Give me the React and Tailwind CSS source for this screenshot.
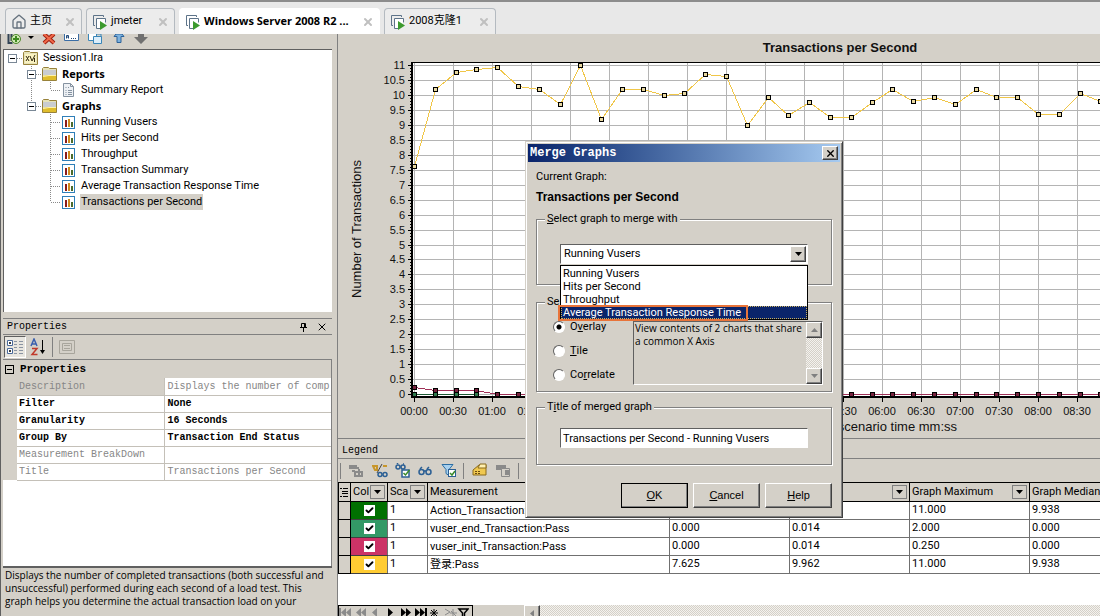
import React, { useState } from "react";
import { Check, House, X } from "lucide-react";

const treeRows = [
  { guides: ["box"], icon: "session", label: "Session1.lra" },
  { guides: ["", "boxTee"], icon: "folder", label: "Reports", bold: true },
  { guides: ["", "v", "l"], icon: "doc", label: "Summary Report" },
  { guides: ["", "boxEnd"], icon: "folder", label: "Graphs", bold: true },
  { guides: ["", "", "t"], icon: "graph", label: "Running Vusers" },
  { guides: ["", "", "t"], icon: "graph", label: "Hits per Second" },
  { guides: ["", "", "t"], icon: "graph", label: "Throughput" },
  { guides: ["", "", "t"], icon: "graph", label: "Transaction Summary" },
  { guides: ["", "", "t"], icon: "graph", label: "Average Transaction Response Time" },
  { guides: ["", "", "l"], icon: "graph", label: "Transactions per Second", selected: true },
];

const properties = [
  { name: "Description", value: "Displays the number of comp", disabled: true },
  { name: "Filter", value: "None" },
  { name: "Granularity", value: "16 Seconds" },
  { name: "Group By", value: "Transaction End Status" },
  { name: "Measurement BreakDown", value: "", disabled: true },
  { name: "Title", value: "Transactions per Second", disabled: true },
];

const legendRows = [
  { color: "bg-[#007000]", name: "Action_Transaction:", values: ["", "", "11.000", "9.938"] },
  { color: "bg-[#339966]", name: "vuser_end_Transaction:Pass", values: ["0.000", "0.014", "2.000", "0.000"] },
  { color: "bg-[#cc3366]", name: "vuser_init_Transaction:Pass", values: ["0.000", "0.014", "0.250", "0.000"] },
  { color: "bg-[#ffcc33]", name: "登录:Pass", values: ["7.625", "9.962", "11.000", "9.938"] },
];

// One sample every 16 seconds
const passSeries = [
  7.63, 10.2, 10.78, 10.88, 10.94, 10.31, 10.2, 9.7, 11, 9.2, 10.2, 10.2, 10, 10.06, 10.7, 10.64, 9,
  9.94, 9.33, 9.77, 9.27, 9.27, 9.77, 10.2, 9.81, 9.94, 9.7, 10.2, 9.94, 9.94, 9.37, 9.37, 10.06, 9.81,
];
const initSeries = passSeries.map((_, i) => [0.25, 0.13, 0.13, 0.13][i] ?? 0);

const graphNames = ["Running Vusers", "Hits per Second", "Throughput", "Average Transaction Response Time"];

const sans = "font-['Roboto','Noto_Sans_CJK_SC',sans-serif]";
const small = "font-['Open_Sans',sans-serif] text-[10px] leading-[13px]";
const arial = "font-['Liberation_Sans',sans-serif]";
const boldSans = "font-['Open_Sans','Noto_Sans_CJK_SC',sans-serif] font-bold";
const mono = "font-['Liberation_Mono','Noto_Sans_CJK_SC',monospace]";
const raised =
  "bg-[#d4d0c8] border border-t-white border-l-white border-r-[#404040] border-b-[#404040] shadow-[inset_-1px_-1px_0_#808080]";
const sunken = "border border-t-[#606060] border-l-[#606060] border-r-white border-b-white";

const VmIcon = () => (
  <svg width="16" height="16" viewBox="0 0 16 16" fill="none" className="shrink-0">
    <path d="M3 11.500H1.500v-10h10V3" stroke="#5d7389" />
    <path d="M8 14.500H4.500v-10h9v4" stroke="#5d7389" fill="#fff" />
    <path d="M8 7l7 4.500-7 4.500z" fill="#3c9a2e" />
  </svg>
);

const Tab = ({ icon, label, width, active }) => (
  <div
    className={`flex h-[26px] items-center rounded-t border border-b-0 pr-[5px] pl-[5px] text-[11px] ${width} ${
      active ? `border-white bg-white ${boldSans}` : "border-[#b4bac0] bg-[#ececec]"
    }`}
  >
    {icon}
    <a href="#" className="ml-[3px] flex-1 whitespace-nowrap">{label}</a>
    <button aria-label={`Close ${label}`} className="text-[#c0c0c0]">
      <X size={12} strokeWidth={4} />
    </button>
  </div>
);

const Guide = ({ kind }) => {
  const box = kind.startsWith("box");
  return (
    <svg width="19" height="16" viewBox="0 0 19 16" fill="none" className="shrink-0">
      <g stroke="#8a8a8a" strokeDasharray="1 1">
        {(kind === "v" || kind === "t" || kind === "boxTee") && <path d="M8.500 0v16" />}
        {(kind === "l" || kind === "boxEnd") && <path d="M8.500 0v8" />}
        {kind && kind !== "v" && <path d="M9 8.500h10" />}
      </g>
      {box && (
        <>
          <rect x="4.500" y="4.500" width="8" height="8" fill="#fff" stroke="#7a8896" />
          <path d="M6 8.500h5" stroke="#000" />
        </>
      )}
    </svg>
  );
};

const TreeIcon = ({ kind }) => {
  if (kind === "graph") {
    return (
      <svg width="19" height="16" viewBox="0 0 19 16" className="shrink-0">
        <rect x="1.500" y="2.500" width="12" height="12" fill="#fff" stroke="#2f7fb8" />
        <rect x="4" y="6" width="2" height="7" fill="#8a1c1c" />
        <rect x="7" y="5" width="2" height="8" fill="#d08a1e" />
        <rect x="10" y="8" width="2" height="5" fill="#4a6a2c" />
      </svg>
    );
  }
  if (kind === "doc") {
    return (
      <svg width="19" height="16" viewBox="0 0 19 16" fill="none" className="shrink-0">
        <path d="M2.500 1.500h7l3 3v10h-10z" fill="#eef1f5" stroke="#8592a0" />
        <path d="M9.500 1.500v3h3M4.500 5.500h1M7 5.500h1M4.500 8.500h1M7 8.500h4M4.500 10.500h1M7 10.500h4M4.500 12.500h1M7 12.500h4" stroke="#8592a0" />
      </svg>
    );
  }
  return (
    <svg width="19" height="16" viewBox="0 0 19 16" className="shrink-0">
      <path d="M.5 2.500l1-1h5l1 1h7v12H.5z" fill="#e6e2b8" stroke="#98823a" />
      {kind === "session" ? (
        <>
          <rect x="2" y="4" width="11" height="9" fill="#fbf3c0" />
          <path d="M3 6l3 5M6 6l-3 5M7 6l2 5 3-6M11.500 8v4" stroke="#332a10" fill="none" />
        </>
      ) : (
        <>
          <path d="M1 4h13v5H1z" fill="#c9ccd0" />
          <path d="M1 10l6-1h7v5H1z" fill="#e0bd2c" />
          <path d="M1 10.500l6-1h7" stroke="#fff3a8" fill="none" />
        </>
      )}
    </svg>
  );
};

const SessionToolbar = () => (
  <div className="flex h-[15px] shrink-0 items-start overflow-hidden pl-1">
    <button aria-label="Add graph" className="w-5">
      <svg width="16" height="12" viewBox="0 0 16 12" fill="none">
        <path d="M1.500 0v9h4M4.500 0v7" stroke="#345" strokeWidth="2" />
        <circle cx="9" cy="5" r="4.500" fill="#cfe8b4" stroke="#4d8a2a" />
        <path d="M9 2v6M6 5h6" stroke="#3f8a20" strokeWidth="2" />
      </svg>
    </button>
    <button aria-label="More" className="-ml-1 flex w-4 justify-center">
      <svg width="6" height="8"><path d="M0 2h6l-3 3z" /></svg>
    </button>
    <button aria-label="Delete" className="flex w-5 justify-center">
      <svg width="14" height="11" viewBox="0 0 14 11">
        <path d="M2 0l10 9M12 0L2 9" stroke="#a02010" strokeWidth="4" />
        <path d="M2 0l10 9M12 0L2 9" stroke="#f0694a" strokeWidth="2" />
      </svg>
    </button>
    <button aria-label="Rename" className="flex w-6 justify-center">
      <svg width="15" height="9" viewBox="0 0 15 9" fill="none">
        <path d="M.5 0v6.500h14V0" fill="#fff" stroke="#3c6ea5" />
        <path d="M2.500 4.500V1.500h2v3M3 3h1M7 4.500h1M9 4.500h1M11 4.500h1" stroke="#224a7a" />
      </svg>
    </button>
    <button aria-label="Duplicate" className="flex w-6 justify-center">
      <svg width="15" height="11" viewBox="0 0 15 11">
        <path d="M.5 0v6.500h8V0" fill="#fff" stroke="#3a86b8" />
        <path d="M5.500 2.500h8v7h-8z" fill="#dceefa" stroke="#3a86b8" />
        <path d="M9 0h4v3" fill="none" stroke="#3a86b8" />
      </svg>
    </button>
    <button aria-label="Move up" className="flex w-6 justify-center">
      <svg width="12" height="10"><path d="M1 2.500h3v6h4v-6h3L9 0H3z" fill="#7db2de" stroke="#2c6299" /></svg>
    </button>
    <button aria-label="Move down" className="flex w-5 justify-center">
      <svg width="14" height="11"><path d="M4 0h6v3h4l-7 7-7-7h4z" fill="#707070" /></svg>
    </button>
  </div>
);

const PropertiesPanel = () => (
  <section className={`mt-1.5 ${mono} text-[10px]`}>
    <header className="flex h-[17px] items-center border-y border-[#808080] pr-1 pl-1">
      <h2 className="flex-1">Properties</h2>
      <button aria-label="Pin" className="mr-2">
        <svg width="9" height="10" viewBox="0 0 9 10" fill="none" stroke="#000">
          <path d="M2.500 5V1.500h4V5M5.500 1v4M1 5.500h7M4.500 6v4" />
        </svg>
      </button>
      <button aria-label="Close properties"><X size={12} strokeWidth={2} /></button>
    </header>
    <div className="flex h-6 items-center gap-1 pl-px">
      <button aria-label="Categorized" className={`flex h-[22px] w-[22px] items-center justify-center bg-[#e8e6e0] ${sunken}`}>
        <svg width="18" height="18" viewBox="0 0 18 18" fill="none">
          <path d="M1.500 2.500h5v5h-5zM1.500 10.500h5v5h-5z" fill="#fff" stroke="#4a6a9a" />
          <path d="M3 5h2M4 4v2M3 13h2M4 12v2" stroke="#000" />
          <path d="M8 3.500h3M13 3.500h4M8 6.500h3M13 6.500h4M8 9.500h3M13 9.500h4M8 12.500h3M13 12.500h4M8 15.500h3M13 15.500h4" stroke="#8a94a2" />
        </svg>
      </button>
      <button aria-label="Alphabetical">
        <svg width="18" height="18" viewBox="0 0 18 18" fill="none">
          <path d="M1 8l3-7 3 7M2 6h4" stroke="#3a5fae" strokeWidth="1.500" />
          <path d="M2 10.500h5l-5 6h5.500" stroke="#c0392b" strokeWidth="1.500" />
          <path d="M12.500 2v12" stroke="#000" />
          <path d="M10 12h5l-2.500 4z" fill="#000" />
        </svg>
      </button>
      <span className="mr-0.5 h-5 border-l border-[#808080]" />
      <button aria-label="Property pages" disabled>
        <svg width="16" height="16" viewBox="0 0 16 16" fill="none" stroke="#a8a59c">
          <path d="M.5 1.500h15v13H.5zM3.500 4.500h9v7h-9zM5 6.500h6M5 9.500h6" />
        </svg>
      </button>
    </div>
    <div className="h-[207px] overflow-hidden border-t border-r border-[#808080] bg-white">
      <table className="w-full table-fixed border-collapse whitespace-nowrap">
        <colgroup>
          <col className="w-3.5" />
          <col className="w-[147px]" />
          <col />
        </colgroup>
        <thead>
          <tr className="h-[18px] bg-[#d4d0c8] text-left text-[11px]">
            <th colSpan="3">
              <div className="flex items-center gap-1.5 pl-0.5">
                <span className="flex h-[9px] w-[9px] items-center justify-center border border-black">
                  <span className="h-px w-[5px] bg-black" />
                </span>
                Properties
              </div>
            </th>
          </tr>
        </thead>
        <tbody>
          {properties.map((p) => (
            <tr key={p.name} className={`h-[17px] ${p.disabled ? "text-[#868686]" : "font-bold"}`}>
              <td className="bg-[#d4d0c8]" />
              <td
                className={`border-r border-b border-[#c4c0b8] pl-0.5 ${
                  p.name === "Description" ? "bg-[#d4d0c8]" : ""
                }`}
              >
                {p.name}
              </td>
              <td className="overflow-hidden border-b border-[#c4c0b8] pl-[3px]">{p.value}</td>
            </tr>
          ))}
        </tbody>
      </table>
    </div>
    <p className={`h-[50px] border-t-2 border-[#606060] pt-px pr-1 pl-0.5 ${small}`}>
      Displays the number of completed transactions (both successful and unsuccessful) performed during each
      second of a load test. This graph helps you determine the actual transaction load on your
    </p>
  </section>
);

// Plot origin and scale inside the chart area
const X0 = 76;
const Y0 = 360;
const px = (i) => Math.round(X0 + i * 20.8);
const py = (v) => Math.round(Y0 - v * 29.9);

const Series = ({ data, stroke, fill }) => (
  <g>
    <polyline
      points={data.map((v, i) => `${px(i) + 0.5},${py(v) + 0.5}`).join(" ")}
      fill="none"
      stroke={stroke}
    />
    {data.map((v, i) => (
      <rect key={i} x={px(i) - 1.5} y={py(v) - 1.5} width="4" height="4" fill={fill} stroke="#000" />
    ))}
  </g>
);

const timeLabels = [
  [0, "00:00"], [1, "00:30"], [2, "01:00"], [3, "01:30"], [11, "05:30"], [12, "06:00"],
  [13, "06:30"], [14, "07:00"], [15, "07:30"], [16, "08:00"], [17, "08:30"],
];

const Chart = () => {
  const yTicks = Array.from({ length: 23 }, (_, i) => i / 2);
  const xTicks = Array.from({ length: 18 }, (_, i) => i);
  return (
    <div className="h-[405px] shrink-0 overflow-hidden border-b border-l border-[#808080]">
      <svg width="100%" height="404" className={arial} fontSize="11" shapeRendering="crispEdges">
        <rect x="74" y="29" width="100%" height="334" fill="#fff" />
        <g stroke="#b4b4b4">
          {yTicks.map((v) => <path key={v} d={`M74 ${py(v) + 0.5}h2000`} />)}
          {xTicks.map((i) => <path key={i} d={`M${X0 + i * 39 + 0.5} 29v334`} />)}
        </g>
        <g fill="#000">
          <rect x="73" y="28" width="2" height="336" />
          <rect x="73" y="28" width="100%" height="1" />
          <rect x="73" y="362" width="100%" height="2" />
          {yTicks.map((v) => <rect key={v} x="70" y={py(v)} width="3" height="1" />)}
          {Array.from({ length: 110 }, (_, i) => (
            <rect key={i} x="72" y={py(i / 10)} width="1" height="1" />
          ))}
          {xTicks.map((i) => <rect key={i} x={X0 + i * 39} y="364" width="1" height="4" />)}
        </g>
        <Series data={[0, 0, 0, 0]} stroke="#1c5a34" fill="#2e7a4c" />
        <Series data={initSeries} stroke="#a03058" fill="#7a2440" />
        <Series data={passSeries} stroke="#f0c648" fill="#e8d8a0" />
        <g fill="#111">
          {yTicks.map((v) => (
            <text key={v} x="67" y={py(v) + 4} textAnchor="end">{v}</text>
          ))}
          {timeLabels.map(([i, label]) => (
            <text key={i} x={X0 + i * 39} y="381" textAnchor="middle">{label}</text>
          ))}
          <text x="502" y="18" textAnchor="middle" fontSize="13" fontWeight="bold">Transactions per Second</text>
          <text x="619" y="397" textAnchor="end" fontSize="13">scenario time mm:ss</text>
          <text transform="translate(23 195) rotate(-90)" textAnchor="middle" fontSize="13">
            Number of Transactions
          </text>
        </g>
      </svg>
    </div>
  );
};

const DropArrow = ({ label }) => (
  <button aria-label={label} className="flex h-3.5 w-[15px] shrink-0 items-center justify-center border border-[#808080]">
    <svg width="7" height="4"><path d="M0 0h7L3.500 4z" /></svg>
  </button>
);

const HeaderCell = ({ label, width, arrow }) => (
  <th className={`h-[19px] border border-black border-l-black px-0.5 font-normal ${width}`}>
    <div className="flex items-center">
      <span className="flex-1 overflow-hidden text-left">{label}</span>
      {arrow && <DropArrow label="Filter column" />}
    </div>
  </th>
);

const LegendToolbar = () => (
  <div className="flex h-[23px] items-center pl-0.5">
    <span className="h-4 border-l border-[#808080]" />
    <button aria-label="Hide" className="ml-2 w-[23px]">
      <svg width="15" height="14" viewBox="0 0 15 14" fill="none" stroke="#8a8a8a" strokeWidth="2">
        <path d="M0 2h8M0 4h10M3 7h3M6 8h7v4H6zM10 5v8" />
      </svg>
    </button>
    <button aria-label="Toggle measurements" className="w-[23px]">
      <svg width="16" height="14" viewBox="0 0 16 14" fill="none">
        <path d="M1 2h4v4H3zM11 2h4" stroke="#c8962a" strokeWidth="2" />
        <path d="M10 0L5 9" stroke="#444" />
        <circle cx="8" cy="10.500" r="2" stroke="#2b5f94" strokeWidth="1.500" />
        <circle cx="13" cy="10.500" r="2" stroke="#2b5f94" strokeWidth="1.500" />
      </svg>
    </button>
    <button aria-label="Show checked" className="w-[23px]">
      <svg width="16" height="15" viewBox="0 0 16 15" fill="none" stroke="#2b5f94" strokeWidth="1.500">
        <circle cx="3" cy="4" r="2" />
        <circle cx="8" cy="4" r="2" />
        <path d="M2 1l1-1M8 1h1" />
        <rect x="7" y="7" width="7" height="7" fill="#fff" />
        <path d="M8.500 10l2 2 4-5" stroke="#3a8a2a" />
      </svg>
    </button>
    <button aria-label="Show all" className="w-[23px]">
      <svg width="14" height="10" viewBox="0 0 14 10" fill="none" stroke="#2b5f94" strokeWidth="1.500">
        <circle cx="3.500" cy="6" r="2.500" />
        <circle cx="10.500" cy="6" r="2.500" />
        <path d="M2 3l2-2M9 3l2-2M6 5h2" />
      </svg>
    </button>
    <button aria-label="Filter" className="w-[22px]">
      <svg width="16" height="15" viewBox="0 0 16 15" fill="none">
        <path d="M1 1.500h11l-4 5v6l-3-2V6.500z" fill="#a8d0ee" stroke="#2b6ea4" />
        <rect x="7.500" y="6.500" width="7" height="7" fill="#fff" stroke="#2b5f94" />
        <path d="M9 10l2 2 3-4" stroke="#3a8a2a" strokeWidth="1.500" />
      </svg>
    </button>
    <span className="h-4 border-l border-[#808080]" />
    <button aria-label="Configure columns" className="ml-2 w-6">
      <svg width="16" height="15" viewBox="0 0 16 15">
        <path d="M1 7l6-5h7v10H1z" fill="#f0c850" stroke="#8a6a1c" />
        <path d="M8 1h6v4H6z" fill="#fff0b0" stroke="#8a6a1c" />
        <path d="M3 8.500h2M6 8.500h2M3 10.500h2M6 10.500h2" stroke="#6a4a10" />
      </svg>
    </button>
    <button aria-label="Copy" className="w-[22px]">
      <svg width="15" height="13" viewBox="0 0 15 13">
        <path d="M0 1h10v5H0z" fill="#8a8a8a" />
        <path d="M5.500 4.500h8v8h-8z" fill="#d4d0c8" stroke="#8a8a8a" />
        <path d="M9 6h4v5H9z" fill="#8a8a8a" />
      </svg>
    </button>
    <span className="h-4 border-l border-[#808080]" />
  </div>
);

const RecordNavigator = () => (
  <div className="flex h-[11px] shrink-0 items-start overflow-hidden">
    <div className="flex h-4 w-[135px] items-start border border-black pt-px">
      <svg width="130" height="11" viewBox="0 0 130 11" fill="#8a8a8a">
        <path d="M0 1h2v9H0zM7 1v9L2 5.500zM12 1v9L7 5.500zM22 1v9l-5-4.500zM27 1v9l-5-4.500zM38 1v9l-5-4.500z" />
        <path fill="#000" d="M49 1v9l5-4.500zM62 1v9l5-4.500zM67 1v9l5-4.500zM76 1v9l5-4.500zM81 1v9l5-4.500zM86 1h2v9h-2z" />
        <path stroke="#000" d="M95 2v8M91 6h8M92 3l6 6M98 3l-6 6" />
        <path stroke="#8a8a8a" d="M106 2l5 3-5 3M114 2v8M111 6h7M112 4l5 5" fill="none" />
        <path stroke="#000" fill="none" strokeWidth="1.500" d="M120 2h9l-3.500 4v4h-2V6z" />
      </svg>
    </div>
    <div className="w-[51px]" />
    <div className="flex h-4 flex-1 bg-[repeating-conic-gradient(#d4d0c8_0_25%,#f4f2ee_0_50%)] bg-size-[2px_2px]">
      <button aria-label="Scroll left" className={`flex h-4 w-4 items-center justify-center ${raised}`}>
        <svg width="4" height="7"><path d="M4 0v7L0 3.500z" fill="#808080" /></svg>
      </button>
    </div>
  </div>
);

const LegendPanel = () => (
  <section className="flex min-h-0 flex-1 flex-col border-l border-[#808080]">
    <h2 className={`h-5 shrink-0 border-b border-[#808080] pt-[5px] pl-1 text-[10px] leading-[14px] ${mono}`}>Legend</h2>
    <LegendToolbar />
    <div className="min-h-0 flex-1 overflow-hidden bg-white">
      <table className="w-[811px] table-fixed border-collapse text-[11px] whitespace-nowrap">
        <thead>
          <tr className="bg-[#d4d0c8]">
            <th className="w-3 border border-black">
              <svg width="9" height="9" className="ml-px" stroke="#000">
                <path d="M0 .5h2M3 .5h5M2 3.500h6M2 5.500h6M0 8.500h2M3 8.500h5" />
              </svg>
            </th>
            <HeaderCell label="Col" width="w-[37px]" arrow />
            <HeaderCell label="Sca" width="w-10" arrow />
            <HeaderCell label="Measurement" width="w-[242px]" arrow />
            <HeaderCell width="w-[120px]" arrow />
            <HeaderCell width="w-[120px]" arrow />
            <HeaderCell label="Graph Maximum" width="w-[120px]" arrow />
            <HeaderCell label="Graph Median" width="w-[120px]" />
          </tr>
        </thead>
        <tbody>
          {legendRows.map((row) => (
            <tr key={row.name} className="h-[18px]">
              <td className="border border-black bg-[#d4d0c8]" />
              <td className={`border-y border-[#404040] ${row.color}`}>
                <label className="mx-auto grid h-[11px] w-[11px] place-items-center bg-white">
                  <input
                    type="checkbox"
                    defaultChecked
                    aria-label={row.name}
                    className="peer col-start-1 row-start-1 h-[11px] w-[11px] appearance-none"
                  />
                  <Check
                    size={9}
                    strokeWidth={5}
                    className="invisible col-start-1 row-start-1 peer-checked:visible"
                  />
                </label>
              </td>
              <td className="border border-[#707070] px-0.5">1</td>
              <td className="border border-[#707070] px-0.5 leading-4">{row.name}</td>
              {row.values.map((v, i) => (
                <td key={i} className="border border-[#707070] px-0.5">{v}</td>
              ))}
            </tr>
          ))}
        </tbody>
      </table>
    </div>
    <RecordNavigator />
  </section>
);

const Group = ({ title, className, children }) => (
  <fieldset
    className={`border border-[#808080] px-2 shadow-[1px_1px_0_#fff,inset_1px_1px_0_#fff] ${className}`}
  >
    <legend className="bg-[#d4d0c8] px-0.5 leading-[14px]">{title}</legend>
    {children}
  </fieldset>
);

const ScrollButton = ({ label, up }) => (
  <button aria-label={label} className={`flex h-4 w-4 items-center justify-center ${raised}`}>
    <svg width="7" height="4" fill="#808080">
      <path d={up ? "M0 4h7L3.500 0z" : "M0 0h7L3.500 4z"} />
    </svg>
  </button>
);

const MergeDialog = () => {
  const [graph, setGraph] = useState("Running Vusers");
  const [type, setType] = useState("Overlay");
  const types = [
    { value: "Overlay", text: <>O<u>v</u>erlay</> },
    { value: "Tile", text: <><u>T</u>ile</> },
    { value: "Correlate", text: <>Co<u>r</u>relate</> },
  ];

  return (
    <div
      role="dialog"
      aria-label="Merge Graphs"
      className="absolute top-[141px] left-[525px] h-[377px] w-[318px] border border-t-[#d4d0c8] border-r-[#404040] border-b-[#404040] border-l-[#d4d0c8] bg-[#d4d0c8] p-0.5 text-[11px] shadow-[inset_1px_1px_0_#fff,inset_-1px_-1px_0_#808080]"
    >
      <div className="flex h-[18px] items-center bg-linear-to-r from-[#0a246a] to-[#a6caf0] pr-0.5 pl-0.5 text-white">
        <h2 className={`flex-1 text-[12px] font-bold ${mono}`}>Merge Graphs</h2>
        <button aria-label="Close" className={`flex h-3.5 w-4 items-center justify-center text-black ${raised}`}>
          <X size={11} strokeWidth={3} />
        </button>
      </div>

      <div className="px-2 pt-2">
        <p className="leading-[14px]">Current Graph:</p>
        <p className={`mt-1.5 text-[12px] leading-[14px] font-bold ${arial}`}>Transactions per Second</p>

        <Group title={<><u>S</u>elect graph to merge with</>} className="mt-2 h-[73px]">
          <div className="relative mx-[15px] mt-[18px]">
            <select
              aria-label="Select graph to merge with"
              value={graph}
              onChange={(e) => setGraph(e.target.value)}
              className={`block h-5 w-full appearance-none bg-white pl-[3px] ${sunken}`}
            >
              {graphNames.map((name) => <option key={name}>{name}</option>)}
            </select>
            <span className={`pointer-events-none absolute top-0.5 right-0.5 flex h-4 w-4 items-center justify-center ${raised}`}>
              <svg width="7" height="4"><path d="M0 0h7L3.500 4z" /></svg>
            </span>
            <ul role="listbox" className="absolute top-[21px] right-0 left-0 z-10 border border-black bg-white pt-px leading-[13px]">
              {graphNames.map((name, i) => (
                <li
                  key={name}
                  role="option"
                  aria-selected={i === 3}
                  className={`relative pl-0.5 ${i === 3 ? "bg-[#0a246a] text-white outline-1 -outline-offset-1 outline-[#c8b060] outline-dotted" : ""}`}
                >
                  {name}
                  {i === 3 && <span className="absolute -top-px -left-[3px] h-4 w-[190px] border-2 border-[#e8743a]" />}
                </li>
              ))}
            </ul>
          </div>
        </Group>

        <Group title="Se" className="mt-[10px] h-[97px]">
          <div className="ml-2 flex">
            <div className="flex w-20 flex-col gap-2.5 pt-[11px]">
              {types.map((t) => (
                <label key={t.value} className="flex h-3.5 items-center gap-[5px]">
                  <input
                    type="radio"
                    name="merge-type"
                    checked={type === t.value}
                    onChange={() => setType(t.value)}
                    className="h-3 w-3 appearance-none rounded-full border border-t-[#606060] border-r-white border-b-white border-l-[#606060] bg-white checked:bg-[radial-gradient(#000_0_2px,#fff_3px)]"
                  />
                  <span>{t.text}</span>
                </label>
              ))}
            </div>
            <div className={`mt-3 flex h-16 flex-1 ${sunken}`}>
              <textarea
                readOnly
                aria-label="Merge type description"
                className={`h-full min-w-0 flex-1 resize-none overflow-hidden pl-px outline-none ${small}`}
                value="View contents of 2 charts that share a common X Axis"
              />
              <div className="flex flex-col justify-between bg-[repeating-conic-gradient(#d4d0c8_0_25%,#f4f2ee_0_50%)] bg-size-[2px_2px]">
                <ScrollButton label="Scroll up" up />
                <ScrollButton label="Scroll down" />
              </div>
            </div>
          </div>
        </Group>

        <Group title={<>T<u>i</u>tle of merged graph</>} className="mt-2 h-[65px]">
          <div className="mx-[15px] mt-3.5">
            <input
              aria-label="Title of merged graph"
              defaultValue="Transactions per Second - Running Vusers"
              className={`block h-5 w-full bg-white pl-0.5 ${sunken}`}
            />
          </div>
        </Group>

        <div className={`mt-[18px] flex justify-end gap-[5px] ${arial}`}>
          <button className={`h-[25px] w-[67px] outline-1 -outline-offset-1 outline-black ${raised}`}><u>O</u>K</button>
          <button className={`h-[25px] w-[67px] ${raised}`}><u>C</u>ancel</button>
          <button className={`h-[25px] w-[67px] ${raised}`}><u>H</u>elp</button>
        </div>
      </div>
    </div>
  );
};

export default function App() {
  return (
    <div className={`relative flex h-screen flex-col overflow-hidden bg-[#d4d0c8] text-black ${sans}`}>
      <nav className="flex h-[34px] shrink-0 items-end gap-1 border-t-2 border-[#8c8c8c] bg-[#e8e8e8] pl-[5px]">
        <Tab icon={<House size={16} strokeWidth={2} className="text-[#66727e]" />} label="主页" width="w-[77px]" />
        <Tab icon={<VmIcon />} label="jmeter" width="w-[89px]" />
        <Tab icon={<VmIcon />} label="Windows Server 2008 R2 ..." width="w-[201px]" active />
        <Tab icon={<VmIcon />} label="2008克隆1" width="w-[112px]" />
      </nav>

      <div className="flex min-h-0 flex-1">
        <aside className="flex w-[332px] shrink-0 flex-col border-l border-[#606060] pl-0.5">
          <SessionToolbar />
          <div className="min-h-0 flex-1 overflow-hidden border-t border-l border-[#606060] bg-white text-[11px]">
            {treeRows.map((row) => (
              <div key={row.label} className="flex h-4 items-center">
                {row.guides.map((g, i) => <Guide key={i} kind={g} />)}
                <TreeIcon kind={row.icon} />
                <span className={`px-px leading-4 ${row.bold ? boldSans : ""} ${row.selected ? "bg-[#d4d0c8]" : ""}`}>
                  {row.label}
                </span>
              </div>
            ))}
          </div>
          <PropertiesPanel />
        </aside>
        <main className="ml-[5px] flex min-w-0 flex-1 flex-col">
          <Chart />
          <LegendPanel />
        </main>
      </div>

      <MergeDialog />
    </div>
  );
}
